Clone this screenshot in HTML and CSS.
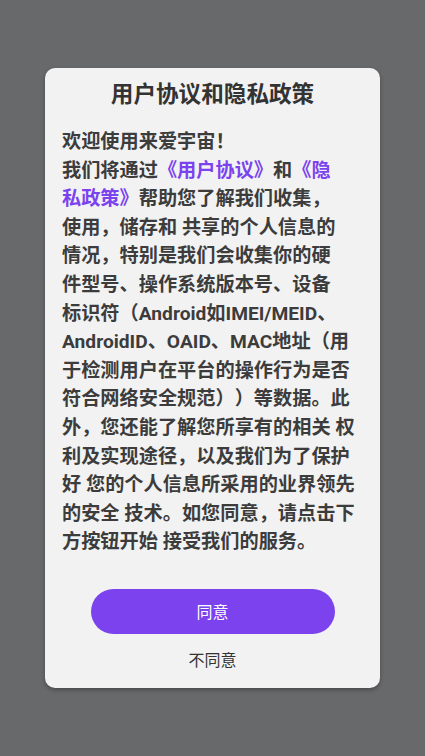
FILE: index.html
```html
<!DOCTYPE html>
<html lang="zh-CN">
<head>
<meta charset="utf-8">
<title>用户协议和隐私政策</title>
<link rel="stylesheet" href="styles.css">
</head>
<body>
<div class="dialog">
  <h1 class="title">用户协议和隐私政策</h1>
  <p class="content">欢迎使用来爱宇宙！<br>我们将通过<span class="link">《用户协议》</span>和<span class="link">《隐<br>私政策》</span>帮助您了解我们收集，<br>使用，储存和 共享的个人信息的<br>情况，特别是我们会收集你的硬<br>件型号、操作系统版本号、设备<br>标识符（Android如IMEI/MEID、<br>AndroidID、OAID、MAC地址（用<br>于检测用户在平台的操作行为是否<br>符合网络安全规范））等数据。此<br>外，您还能了解您所享有的相关 权<br>利及实现途径，以及我们为了保护<br>好 您的个人信息所采用的业界领先<br>的安全 技术。如您同意，请点击下<br>方按钮开始 接受我们的服务。</p>
  <button class="agree" type="button">同意</button>
  <button class="disagree" type="button">不同意</button>
</div>
</body>
</html>
```
FILE: styles.css
```css
html, body {
  margin: 0;
  padding: 0;
  height: 100%;
}
body {
  background: #68696b;
  display: flex;
  align-items: center;
  justify-content: center;
  font-family: Roboto, "Noto Sans CJK SC", sans-serif;
  text-spacing-trim: space-all;
}
.dialog {
  width: 335px;
  box-sizing: border-box;
  background: #f2f2f2;
  border-radius: 10px;
  box-shadow: 0 2px 4px rgba(0, 0, 0, 0.3);
  padding: 12px 0 15px;
  display: flex;
  flex-direction: column;
  align-items: center;
}
.title {
  margin: 0;
  font-size: 22.6px;
  line-height: 30px;
  font-weight: 700;
  color: #333333;
}
.content {
  align-self: stretch;
  margin: 18px 0 0;
  padding: 0 17px;
  font-size: 19.2px;
  line-height: 28.6px;
  font-weight: 700;
  color: #3c3c3c;
  white-space: nowrap;
}
.link {
  color: #7b43ee;
}
.agree {
  margin-top: 32px;
  width: 244px;
  height: 45px;
  border: none;
  border-radius: 23px;
  background: #7b42ee;
  color: #ffffff;
  font-family: inherit;
  font-size: 16px;
  padding: 0;
}
.disagree {
  margin-top: 15px;
  border: none;
  background: none;
  color: #333333;
  font-family: inherit;
  font-size: 16px;
  line-height: 24px;
  padding: 0;
}
```
